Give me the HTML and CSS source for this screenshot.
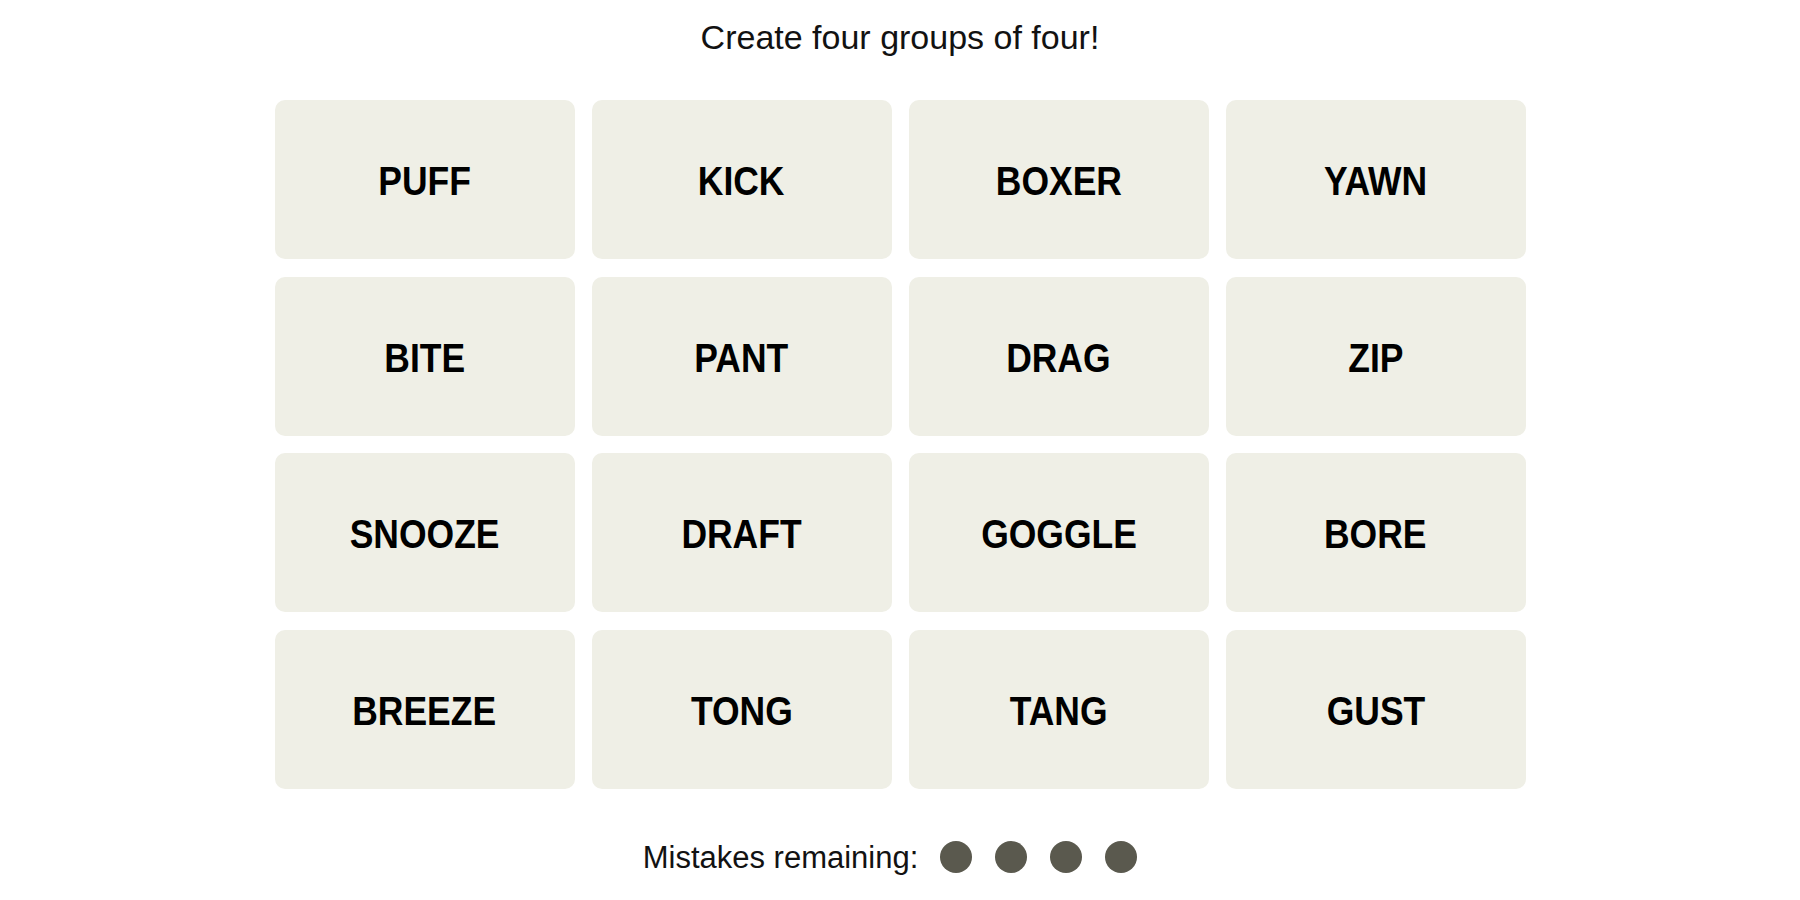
FILE: index.html
```html
<!DOCTYPE html>
<html lang="en">
<head>
<meta charset="utf-8">
<title>Connections</title>
<link rel="stylesheet" href="styles.css">
</head>
<body>
<main class="game">
  <p class="prompt">Create four groups of four!</p>
  <div class="board">
    <button class="tile"><span class="word">PUFF</span></button>
    <button class="tile"><span class="word">KICK</span></button>
    <button class="tile"><span class="word">BOXER</span></button>
    <button class="tile"><span class="word">YAWN</span></button>
    <button class="tile"><span class="word">BITE</span></button>
    <button class="tile"><span class="word">PANT</span></button>
    <button class="tile"><span class="word">DRAG</span></button>
    <button class="tile"><span class="word">ZIP</span></button>
    <button class="tile"><span class="word">SNOOZE</span></button>
    <button class="tile"><span class="word">DRAFT</span></button>
    <button class="tile"><span class="word">GOGGLE</span></button>
    <button class="tile"><span class="word">BORE</span></button>
    <button class="tile"><span class="word">BREEZE</span></button>
    <button class="tile"><span class="word">TONG</span></button>
    <button class="tile"><span class="word">TANG</span></button>
    <button class="tile"><span class="word">GUST</span></button>
  </div>
  <div class="mistakes">
    <span class="mistakes-label">Mistakes remaining:</span>
    <span class="dots">
      <span class="dot"></span>
      <span class="dot"></span>
      <span class="dot"></span>
      <span class="dot"></span>
    </span>
  </div>
</main>
</body>
</html>
```
FILE: styles.css
```css
html, body {
  margin: 0;
  padding: 0;
  background: #ffffff;
}

.game {
  width: 1800px;
  height: 900px;
  display: flex;
  flex-direction: column;
  align-items: center;
  font-family: "Liberation Sans", Arial, sans-serif;
  color: #121212;
}

.prompt {
  margin: 17px 0 0 0;
  height: 40px;
  line-height: 40px;
  font-size: 34px;
  font-weight: 400;
}

.board {
  margin-top: 43px;
  display: grid;
  grid-template-columns: repeat(4, 300px);
  grid-auto-rows: 159px;
  column-gap: 17px;
  row-gap: 17.5px;
}

.tile {
  border: none;
  border-radius: 10px;
  background: #efefe6;
  color: #000000;
  font-family: "Liberation Sans", Arial, sans-serif;
  font-weight: 700;
  font-size: 41px;
  padding: 4px 0 0 0;
  margin: 0;
  display: flex;
  align-items: center;
  justify-content: center;
}

.word {
  display: inline-block;
  transform: scaleX(0.865);
}

.mistakes {
  margin-top: 49px;
  padding-right: 20px;
  display: flex;
  align-items: center;
  gap: 22px;
}

.mistakes-label {
  font-size: 31px;
  line-height: 36px;
  padding-top: 2px;
}

.dots {
  display: flex;
  gap: 23px;
}

.dot {
  width: 32px;
  height: 32px;
  border-radius: 50%;
  background: #5a594e;
}
```
